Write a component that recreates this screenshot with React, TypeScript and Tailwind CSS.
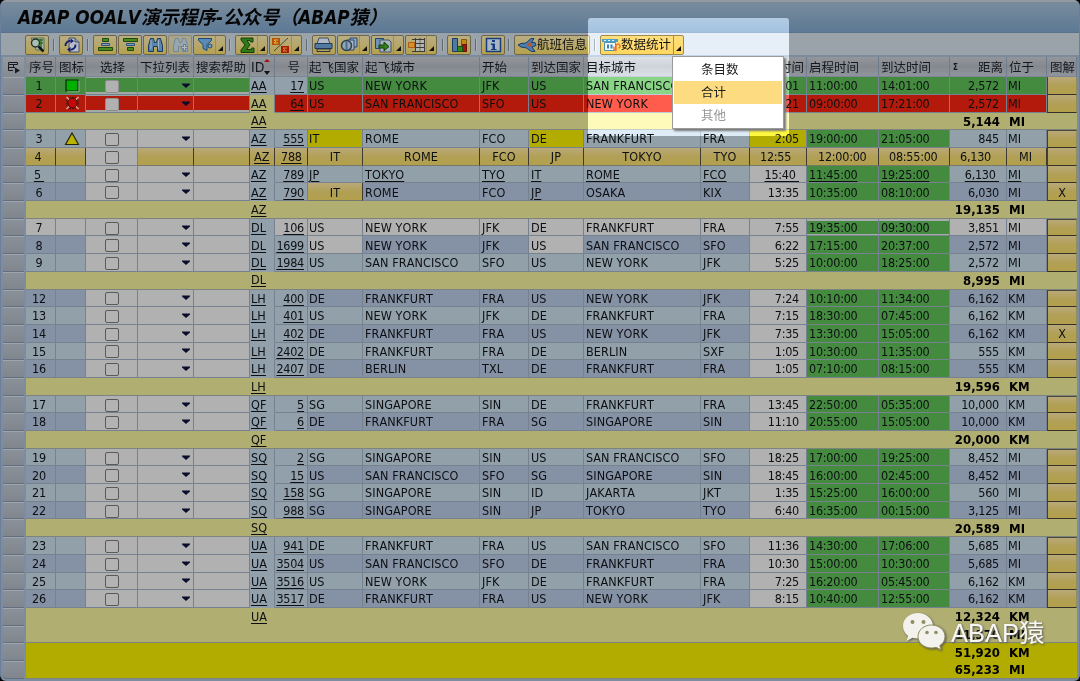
import type { ReactNode } from 'react'
import clsx from 'clsx'

type Tone = 'key' | 'odd' | 'even' | 'gray' | 'green' | 'red' | 'yellow' | 'gold' | 'sub'

interface Flight {
  kind: 'row'
  no: string
  cells: string[] // id, number, country from, city from, from, country to, city to, to, duration, dep, arr, distance, unit
}

interface Total {
  kind: 'sub' | 'total'
  id: string
  value: string
  unit: string
  joined?: boolean
}

type Line = Flight | Total

const row = (text: string): Flight => {
  const [no, ...cells] = text.split('|')
  return { kind: 'row', no, cells }
}

const sub = (id: string, value: string, unit: string, joined = false): Total => ({
  kind: 'sub',
  id,
  value,
  unit,
  joined,
})

const lines: Line[] = [
  row('1|AA|17|US|NEW YORK|JFK|US|SAN FRANCISCO|SFO|6:01|11:00:00|14:01:00|2,572|MI'),
  row('2|AA|64|US|SAN FRANCISCO|SFO|US|NEW YORK|JFK|5:21|09:00:00|17:21:00|2,572|MI'),
  sub('AA', '5,144', 'MI'),
  row('3|AZ|555|IT|ROME|FCO|DE|FRANKFURT|FRA|2:05|19:00:00|21:05:00|845|MI'),
  row('4|AZ|788|IT|ROME|FCO|JP|TOKYO|TYO|12:55|12:00:00|08:55:00|6,130|MI'),
  row('5|AZ|789|JP|TOKYO|TYO|IT|ROME|FCO|15:40|11:45:00|19:25:00|6,130|MI'),
  row('6|AZ|790|IT|ROME|FCO|JP|OSAKA|KIX|13:35|10:35:00|08:10:00|6,030|MI'),
  sub('AZ', '19,135', 'MI'),
  row('7|DL|106|US|NEW YORK|JFK|DE|FRANKFURT|FRA|7:55|19:35:00|09:30:00|3,851|MI'),
  row('8|DL|1699|US|NEW YORK|JFK|US|SAN FRANCISCO|SFO|6:22|17:15:00|20:37:00|2,572|MI'),
  row('9|DL|1984|US|SAN FRANCISCO|SFO|US|NEW YORK|JFK|5:25|10:00:00|18:25:00|2,572|MI'),
  sub('DL', '8,995', 'MI'),
  row('12|LH|400|DE|FRANKFURT|FRA|US|NEW YORK|JFK|7:24|10:10:00|11:34:00|6,162|KM'),
  row('13|LH|401|US|NEW YORK|JFK|DE|FRANKFURT|FRA|7:15|18:30:00|07:45:00|6,162|KM'),
  row('14|LH|402|DE|FRANKFURT|FRA|US|NEW YORK|JFK|7:35|13:30:00|15:05:00|6,162|KM'),
  row('15|LH|2402|DE|FRANKFURT|FRA|DE|BERLIN|SXF|1:05|10:30:00|11:35:00|555|KM'),
  row('16|LH|2407|DE|BERLIN|TXL|DE|FRANKFURT|FRA|1:05|07:10:00|08:15:00|555|KM'),
  sub('LH', '19,596', 'KM'),
  row('17|QF|5|SG|SINGAPORE|SIN|DE|FRANKFURT|FRA|13:45|22:50:00|05:35:00|10,000|KM'),
  row('18|QF|6|DE|FRANKFURT|FRA|SG|SINGAPORE|SIN|11:10|20:55:00|15:05:00|10,000|KM'),
  sub('QF', '20,000', 'KM'),
  row('19|SQ|2|SG|SINGAPORE|SIN|US|SAN FRANCISCO|SFO|18:25|17:00:00|19:25:00|8,452|MI'),
  row('20|SQ|15|US|SAN FRANCISCO|SFO|SG|SINGAPORE|SIN|18:45|16:00:00|02:45:00|8,452|MI'),
  row('21|SQ|158|SG|SINGAPORE|SIN|ID|JAKARTA|JKT|1:35|15:25:00|16:00:00|560|MI'),
  row('22|SQ|988|SG|SINGAPORE|SIN|JP|TOKYO|TYO|6:40|16:35:00|00:15:00|3,125|MI'),
  sub('SQ', '20,589', 'MI'),
  row('23|UA|941|DE|FRANKFURT|FRA|US|SAN FRANCISCO|SFO|11:36|14:30:00|17:06:00|5,685|MI'),
  row('24|UA|3504|US|SAN FRANCISCO|SFO|DE|FRANKFURT|FRA|10:30|15:00:00|10:30:00|5,685|MI'),
  row('25|UA|3516|US|NEW YORK|JFK|DE|FRANKFURT|FRA|7:25|16:20:00|05:45:00|6,162|KM'),
  row('26|UA|3517|DE|FRANKFURT|FRA|US|NEW YORK|JFK|8:15|10:40:00|12:55:00|6,162|KM'),
  sub('UA', '12,324', 'KM', true),
  sub('', '11,370', 'MI'),
  { kind: 'total', id: '', value: '51,920', unit: 'KM', joined: true },
  { kind: 'total', id: '', value: '65,233', unit: 'MI' },
]

const toneClass: Record<Tone, string> = {
  key: 'bg-[#92a0ab]',
  odd: 'bg-[#92a0aa]',
  even: 'bg-[#8591a4]',
  gray: 'bg-[#b1b1b1]',
  green: 'bg-[#448b40]',
  red: 'bg-[#b31a0c]',
  yellow: 'bg-[#b2ac00]',
  gold: 'bg-linear-to-b from-[#baa978] via-[#b1a056] to-[#b3a04c]',
  sub: 'bg-[#b1ae72]',
}

const gridCols =
  'grid grid-cols-[26px_30px_30px_52px_56px_56px_25px_33px_55px_117px_49px_55px_117px_49px_57px_72px_71px_57px_40px_30px]'

// Column index inside Flight.cells -> tone of the cell
function toneOf(no: string, col: number): Tone {
  const base: Tone = Number(no) % 2 ? 'odd' : 'even'
  if (col === 0) return no === '2' ? 'sub' : no === '4' ? 'gold' : 'key'
  if (no === '4') return 'gold'
  if (no === '1') return col === 1 ? 'key' : 'green'
  if (no === '2') return 'red'
  if (col === 9 || col === 10) return 'green'
  if (no === '3' && (col === 2 || col === 5 || col === 8)) return 'yellow'
  if (no === '6' && col === 2) return 'gold'
  if (no === '7') return 'gray'
  if (no === '8' && (col === 2 || col === 5)) return 'gray'
  if (col === 8) return 'gray'
  if (col === 1) return 'key'
  return base
}

function isUnderlined(no: string, col: number) {
  if (col < 2) return true
  if (no === '5') return true
  return no === '6' && col === 5
}

const isNumeric = (col: number) => col === 1 || (col >= 8 && col <= 11)

function Cell({ tone, className, children }: { tone: Tone; className?: string; children?: ReactNode }) {
  return (
    <div
      className={clsx(
        'flex min-w-0 items-center overflow-hidden border-b border-r pt-[2px] whitespace-pre',
        tone === 'gold' ? 'border-r-[#3f3b33] border-b-[#77776a]' : 'border-[#76828f]',
        toneClass[tone],
        className,
      )}
    >
      {children}
    </div>
  )
}

function Selector({ last }: { last?: boolean }) {
  return (
    <div className="flex pl-[3px]">
      <div
        className={clsx(
          'w-[21px] border-t border-b border-t-[#a0a5ab] border-b-[#626f80] bg-linear-to-b from-[#8a9099] to-[#81868e]',
          last && 'rounded-bl-sm',
        )}
      />
    </div>
  )
}

function StatusIcon({ no }: { no: string }) {
  if (no === '1') {
    return (
      <svg className="h-[14px] w-[15px]" viewBox="0 0 15 14">
        <path d="M1 1h12v11H1z" fill="#00b000" stroke="#10240f" strokeWidth="1.2" />
        <path d="M2 12.800h12V2" fill="none" stroke="#8bb487" />
      </svg>
    )
  }
  if (no === '2') {
    return (
      <svg className="h-[14px] w-[15px]" viewBox="0 0 15 15">
        <path d="M1 1l3 3M14 1l-3 3M1 14l3-3M14 14l-3-3" stroke="#d6a79c" strokeWidth="1.500" />
        <path d="M4 1.500h7M4 13.500h7M1.500 4v7M13.500 4v7" stroke="#301210" strokeDasharray="2 1" />
        <circle cx="7.500" cy="7.500" r="5" fill="#c40808" stroke="#4a0d0a" />
      </svg>
    )
  }
  if (no === '3') {
    return (
      <svg className="h-[14px] w-[16px]" viewBox="0 0 16 14">
        <path d="M8 1l6.500 11.500h-13z" fill="#b9b400" stroke="#26260d" strokeWidth="1.200" />
      </svg>
    )
  }
  return null
}

const columnPad = [
  'pl-px',
  'justify-end pr-[3px]',
  'pl-[1px]',
  'pl-[2px]',
  'pl-[2px]',
  'pl-[2px]',
  'pl-[2px]',
  'pl-[2px]',
  'justify-end pr-[7px]',
  'pl-[2px]',
  'pl-[2px]',
  'justify-end pr-[7px]',
  'pl-[1px]',
]

const buttonPad = [
  'pl-1',
  'pl-[6px]',
  'justify-center',
  'justify-center',
  'justify-center',
  'justify-center',
  'justify-center',
  'justify-center',
  'pl-[10px]',
  'pl-[11px]',
  'pl-[10px]',
  'pl-[10px]',
  'pl-[12px]',
]

function FlightRow({ flight, afterSub }: { flight: Flight; afterSub: boolean }) {
  const { no, cells } = flight
  const base: Tone =
    no === '1' ? 'green' : no === '2' ? 'red' : no === '4' ? 'gold' : no === '7' ? 'gray' : Number(no) % 2 ? 'odd' : 'even'
  const inputTone: Tone = no === '1' ? 'green' : no === '2' ? 'red' : 'gray'
  const inset = no === '1' || no === '2' ? 'shadow-[inset_0_-2px_0_#a3a9a6,inset_0_1px_0_#9ba5a4]' : ''

  return (
    <div className={clsx(gridCols, 'h-[17.690px] text-[12.500px]')}>
      <Selector />
      <Cell tone={base} className={clsx(no === '4' ? 'justify-center pr-[5px]' : 'justify-center pr-[3px]')}>
        <span className={clsx('tracking-[-0.25px]', no === '5' && 'underline underline-offset-2')}>
          {no === '5' ? '5 ' : no}
        </span>
      </Cell>
      <Cell tone={base} className="justify-center pt-0! pl-[3px]">
        <StatusIcon no={no} />
      </Cell>
      <Cell tone={inputTone} className={clsx('justify-center', inset)}>
        <span
          className={clsx(
            'h-[13px] w-[14px] rounded-[2px] border',
            Number(no) < 3 ? 'border-[#908f8f] bg-[#b1b1b1]' : 'border-[#595959] bg-[#b3b3b3]',
          )}
        />
      </Cell>
      <Cell tone={no === '4' ? 'gold' : inputTone} className={clsx('justify-end pt-0! pr-[3px]', inset)}>
        {no !== '4' && (
          <svg className="h-[5px] w-2" viewBox="0 0 8 5">
            <path d="M0 .5h8v1L4 5 0 1.500z" fill="#0a0d2c" />
          </svg>
        )}
      </Cell>
      <Cell tone={no === '4' ? 'gold' : inputTone} className={inset} />
      {cells.map((text, col) => {
        const tone = toneOf(no, col)
        return (
          <Cell
            key={col}
            tone={tone}
            className={clsx(
              tone === 'gold' ? buttonPad[col] : columnPad[col],
              col === 0 && tone !== 'gold' && 'border-b-transparent',
              no === '7' && (col === 9 || col === 10) && 'shadow-[inset_0_2px_0_#a7adad,inset_0_-1px_0_#a7adad]',
            )}
          >
            <span
              className={clsx(
                'relative z-10',
                isNumeric(col) ? 'tracking-[-0.25px]' : 'tracking-[0.1px]',
                isUnderlined(no, col) && 'underline underline-offset-2',
              )}
            >
              {no === '5' && (col === 8 || col === 11) ? text + ' ' : text}
            </span>
          </Cell>
        )
      })}
      <Cell
        tone="gold"
        className={clsx(
          'justify-center border-l border-l-[#3c3f45] border-r-[#938c5f]! border-b-[#33312a]!',
          afterSub && 'border-t border-t-[#4b4838]',
        )}
      >
        {(no === '6' || no === '14') && 'X'}
      </Cell>
    </div>
  )
}

function TotalRow({ total, last }: { total: Total; last: boolean }) {
  return (
    <div className="flex h-[17.690px]">
      <div className="grid w-[26px]">
        <Selector last={last} />
      </div>
      <div
        className={clsx(
          'flex w-[1051px] items-center border-b pt-px',
          total.kind === 'sub' ? 'bg-[#b1ae72]' : 'bg-[#b2ac00]',
          total.joined ? 'border-transparent' : 'border-[#7d8480]',
        )}
      >
        <span className="pl-[225px] text-[12.500px] underline underline-offset-2">{total.id}</span>
        <span className="ml-auto text-[13px] font-bold text-black">{total.value}</span>
        <span className="ml-[9px] w-[68px] text-[13px] font-bold text-black">{total.unit}</span>
      </div>
    </div>
  )
}

const headers = [
  { label: '序号', className: 'pl-[3px]' },
  { label: '图标', className: 'pl-[3px]' },
  { label: '选择', className: 'pl-[14px]' },
  { label: '下拉列表', className: 'pl-[2px]' },
  { label: '搜索帮助', className: 'pl-[2px]' },
  { label: 'ID', className: 'pl-px text-[14px]' },
  { label: '号', className: 'justify-end pr-[7px]' },
  { label: '起飞国家', className: 'pl-[1px]' },
  { label: '起飞城市', className: 'pl-[2px]' },
  { label: '开始', className: 'pl-[2px]' },
  { label: '到达国家', className: 'pl-[2px]' },
  { label: '目标城市', className: 'pl-[2px]' },
  { label: '', className: 'pl-[2px]' },
  { label: '时间', className: 'justify-end pr-[2px]' },
  { label: '启程时间', className: 'pl-[2px]' },
  { label: '到达时间', className: 'pl-[2px]' },
  { label: '距离', className: 'justify-end pr-[3px]' },
  { label: '位于', className: 'pl-[2px]' },
  { label: '图解', className: 'pl-[3px]' },
]

function HeaderRow() {
  return (
    <div className={clsx(gridCols, 'h-[20.300px] text-[12.500px] text-[#15181c]')}>
      <div className="flex pl-[3px]">
        <div className="flex w-[21px] items-center justify-center bg-linear-to-b from-[#979a9e] to-[#858b93]">
          <svg className="h-[13px] w-[14px]" viewBox="0 0 14 13" fill="none" stroke="#181b20">
            <path d="M1.500 1.500h9v2h-9zM1.500 4v5.500H6M1.500 6.500H8M6.500 3.500v3" />
            <path d="M8 6.500l5 3-5 3z" fill="#181b20" stroke="none" />
          </svg>
        </div>
      </div>
      {headers.map((h, i) => (
        <div
          key={i}
          className={clsx(
            'flex min-w-0 items-center overflow-hidden border-r border-r-[#717c8a] border-b border-b-[#7d8793] bg-linear-to-b from-[#93969a] via-[#85898f] to-[#8f959c] whitespace-nowrap',
            h.label === 'ID' ? 'pt-px' : 'pt-[3px]',
            h.className,
          )}
        >
          {h.label === '距离' && <span className="mr-auto pl-[3px] text-[8px] font-bold">Σ</span>}
          <span className="relative z-10">{h.label}</span>
          {h.label === 'ID' && (
            <svg className="h-4 w-[6px] shrink-0" viewBox="0 0 6 16">
              <path d="M0 3L3 0l3 3z" fill="#a80d0d" />
              <path d="M0 12h6l-3 4z" fill="#111" />
            </svg>
          )}
        </div>
      ))}
    </div>
  )
}

function Corner() {
  return (
    <svg className="absolute right-[2px] bottom-[3px] size-[5px]" viewBox="0 0 5 5">
      <path d="M5 0v5H0z" fill="#111" />
    </svg>
  )
}

function ToolButton({ className, menu, children }: { className: string; menu?: boolean; children: ReactNode }) {
  return (
    <div
      className={clsx(
        'relative flex h-[20px] shrink-0 items-center rounded-[2px] border border-[#6f664a] bg-linear-to-b from-[#b9ad83] to-[#b5a14e] pl-[3px]',
        className,
      )}
    >
      {children}
      {menu && <span className="absolute top-0 right-[9px] h-full w-px bg-[#a08f52]" />}
      {menu && <Corner />}
    </div>
  )
}

function Separator({ className }: { className: string }) {
  return <span className={clsx('h-3 w-[2px] shrink-0 border-l border-[#62696f] bg-[#aab0b6]', className)} />
}

function Icon({ children, wide }: { children: ReactNode; wide?: boolean }) {
  return (
    <svg className={clsx('h-4 shrink-0', wide ? 'w-5' : 'w-[17px]')} viewBox={wide ? '0 0 20 16' : '0 0 17 16'} fill="none">
      {children}
    </svg>
  )
}

function Toolbar() {
  return (
    <div className="flex h-6 shrink-0 items-start border-b-2 border-[#7b8b9d] bg-[#9aa2aa] pt-[2px] pl-[24px] text-[12.500px] text-[#111]">
      <ToolButton className="w-6">
        <Icon>
          <path d="M2 1h13v12H7z" fill="#a9b4ac" stroke="#58735a" />
          <path d="M12 2v10M9 3h5M9 6h5" stroke="#2e7023" strokeWidth="1.500" />
          <circle cx="6.500" cy="6" r="4" fill="#a9c0b0" stroke="#24302b" strokeWidth="1.400" />
          <path d="M9.500 9.500l5 5" stroke="#111a16" strokeWidth="2.500" />
        </Icon>
      </ToolButton>
      <Separator className="mt-1 ml-[4px]" />
      <ToolButton className="ml-[4px] w-6">
        <Icon>
          <path d="M6 1h6l4 4v10H6z" fill="#b7bcc6" stroke="#41506a" />
          <path d="M12 1v4h4" fill="#8e9cb0" stroke="#41506a" />
          <path d="M2.500 9a4.500 4.500 0 0 1 5-5M12.500 7.500a4.500 4.500 0 0 1-5 5" stroke="#15196e" strokeWidth="1.800" />
          <path d="M7.500 1.500l3.500 2.500-3.500 2.500zM7.500 10l-3.500 2.500L7.500 15z" fill="#15196e" />
        </Icon>
      </ToolButton>
      <Separator className="mt-1 ml-[4px]" />
      <ToolButton className="ml-[4px] w-6">
        <Icon>
          <path d="M5.500 1.500h6v3h-6z" fill="#4c8a1a" stroke="#1d4a12" />
          <path d="M4.500 6.500h8v2h-8z" fill="#7aa0bd" stroke="#2a547c" />
          <path d="M1.500 10.500h14v3h-14z" fill="#4c8a1a" stroke="#1d4a12" />
        </Icon>
      </ToolButton>
      <ToolButton className="ml-px w-6">
        <Icon>
          <path d="M1.500 1.500h14v3h-14z" fill="#4c8a1a" stroke="#1d4a12" />
          <path d="M4.500 6.500h8v2h-8z" fill="#7aa0bd" stroke="#2a547c" />
          <path d="M5.500 10.500h6v3h-6z" fill="#4c8a1a" stroke="#1d4a12" />
        </Icon>
      </ToolButton>
      <ToolButton className="ml-px w-6">
        <Icon>
          <path d="M3.500 1.500h3l1 4h2l1-4h3l2 7v6h-5v-5h-4v5h-5v-6z" fill="#5b82a8" stroke="#143a68" />
          <path d="M4 3v9M11.500 3v9" stroke="#9bb3c8" />
        </Icon>
      </ToolButton>
      <ToolButton className="ml-px w-6 border-[#8e8870] from-[#a9a58f]! to-[#aaa376]!">
        <Icon>
          <path d="M3.500 1.500h3l1 4h2l1-4h3l2 7v6h-5v-5h-4v5h-5v-6z" fill="#98a6ad" stroke="#7088a0" />
          <path d="M12.500 7v7M9 10.500h7" stroke="#6683a2" strokeWidth="3" />
          <path d="M12.500 8v5M10 10.500h5" stroke="#b4bcc0" />
        </Icon>
      </ToolButton>
      <ToolButton menu className="ml-px w-[33px]">
        <Icon>
          <path d="M1.500 1.500h13v2l-4.500 4v6l-4-2V7.500l-4.500-4z" fill="#5b8bb4" stroke="#1c4a7a" />
          <circle cx="13" cy="9" r="2" fill="#7fa2bd" stroke="#1c4a7a" />
        </Icon>
      </ToolButton>
      <Separator className="mt-1 ml-[3px]" />
      <ToolButton menu className="ml-[4px] w-[33px]">
        <Icon>
          <path d="M2 1h12v4h-2.500l-.5-1.500H8L11 8l-3.500 4.500H12l.5-1.500H15v4.500H2V13l4-5-4-5z" fill="#2e7a16" stroke="#143f0c" />
        </Icon>
      </ToolButton>
      <ToolButton menu className="ml-px w-[33px] pl-[1px]!">
        <Icon wide>
          <path d="M1 1h8v7H1z" fill="#b5500f" />
          <path d="M7 3H3l2 1.500L3 6h4" stroke="#e6bd30" />
          <path d="M10 9h8v7h-8z" fill="#a91b0e" />
          <path d="M16 11h-4l2 1.500-2 1.500h4" stroke="#d88b22" />
          <path d="M3 14L17 1" stroke="#4b4741" />
        </Icon>
      </ToolButton>
      <Separator className="mt-1 ml-[4px]" />
      <ToolButton className="ml-[4px] w-6 pl-[1px]!">
        <Icon wide>
          <path d="M5 1h9l2 6H3z" fill="#afb9c4" stroke="#3d4d63" />
          <path d="M1 6.500h17v5H1z" fill="#54799f" stroke="#193a63" />
          <path d="M3 12h13v2.500H3z" fill="#b5a85f" stroke="#2a3440" />
        </Icon>
      </ToolButton>
      <ToolButton menu className="ml-px w-[33px] pl-[2px]!">
        <Icon wide>
          <path d="M10 1h7v9h-7z" fill="#93a9c4" stroke="#27466e" />
          <path d="M7 3h7v10H7z" fill="#a9b7c5" stroke="#27466e" />
          <circle cx="6.500" cy="8.500" r="5" fill="#93a5b3" stroke="#2d3e52" strokeWidth="1.500" />
          <path d="M6.500 4v9" stroke="#4a6d90" strokeWidth="2" />
        </Icon>
      </ToolButton>
      <ToolButton menu className="ml-px w-[33px] pl-[2px]!">
        <Icon wide>
          <path d="M1.500 1.500h8v10h-8z" fill="#6d93b5" stroke="#1f4670" />
          <path d="M6 3h9l2 2v10H6z" fill="#a9b6bf" stroke="#41536a" />
          <path d="M5 8h5V5l5 4.500L10 14v-3H5z" fill="#2f7f16" stroke="#173f0d" />
        </Icon>
      </ToolButton>
      <ToolButton menu className="ml-px w-[32px] pl-[1px]!">
        <Icon wide>
          <path d="M5 2.500h13M5 6.500h13M5 10.500h13M5 14.500h13M8.500 1v14M13 1v14M17.500 1v14" stroke="#3b3b3c" />
          <path d="M9 3h3.500v3H9zM13.500 3H17v3h-3.500zM9 7h3.500v3H9zM13.500 7H17v3h-3.500zM9 11h3.500v3H9zM13.500 11H17v3h-3.500z" fill="#b2b5b5" />
          <path d="M1.500 5.500h6v5h-6z" fill="#d5912c" stroke="#b25c10" />
        </Icon>
      </ToolButton>
      <Separator className="mt-1 ml-[5px]" />
      <ToolButton className="ml-[3px] w-6">
        <Icon>
          <path d="M1.500 1.500h5v13h-5z" fill="#5279a0" stroke="#173b69" />
          <path d="M10.500 2.500h5v7h-5z" fill="#c08b12" stroke="#86560d" />
          <path d="M11.500 7.500h4v7h-4z" fill="#a3160d" stroke="#650f0b" />
          <path d="M6.500 9.500h5v5h-5z" fill="#2f8a18" stroke="#165010" />
        </Icon>
      </ToolButton>
      <Separator className="mt-1 ml-[4px]" />
      <ToolButton className="ml-[4px] w-6">
        <Icon>
          <path d="M1.500 1.500h14v13h-14z" fill="#a9b5c0" stroke="#173d7c" strokeWidth="1.500" />
          <path d="M7 3h3v2H7zM6 6.500h4V12h1.500v1H6v-1h1.500V8H6z" fill="#123d82" />
        </Icon>
      </ToolButton>
      <Separator className="mt-1 ml-[3px]" />
      <ToolButton className="ml-[4px] w-[76px] pl-[2px]!">
        <Icon wide>
          <path d="M1 8l3-1.500 5-.5 5-4.500h3L14.500 5.500H18l1 3-4 1.500 3 4.500h-3.500L9.500 11 4 10z" fill="#4f7cab" stroke="#173e70" />
          <path d="M11 6h3.500v4l-3-1z" fill="#c5531b" />
        </Icon>
        <span className="relative z-10 pt-px">航班信息</span>
      </ToolButton>
      <Separator className="mt-1 ml-[4px]" />
      {/* active button, drawn at full brightness */}
      <ToolButton menu className="z-10 ml-[4px] w-[84px] border-[#a08a4c]! from-[#ffdf7e]! to-[#ffd75e]! pl-0!">
        <Icon wide>
          <path d="M1 2h16v3H1z" fill="#4f9fc4" />
          <path d="M3 3.500h2M7 3.500h2M11 3.500h2" stroke="#e8f4fa" />
          <path d="M3.500 5.500h11v8h-11z" fill="#f2f8fb" stroke="#4a93b3" />
          <path d="M6 7.500h2v4H6zM9.500 7.500h2v4h-2z" fill="#3d7fa6" />
          <path d="M15 14V9.500a2 2 0 1 1 2.500 1.500M13 9.500v3l2 1.500" stroke="#e87a2c" strokeWidth="1.500" />
        </Icon>
        <span className="pt-px">数据统计</span>
      </ToolButton>
    </div>
  )
}

function DropdownMenu() {
  return (
    <div className="absolute top-14 left-[672px] z-20 flex h-[73px] w-28 flex-col border border-[#9a9a9a] bg-white pt-[2px] text-[12.500px] text-[#1c1c1c] shadow-[2px_2px_2px_#777]">
      <div className="flex h-[22px] items-center pl-7">条目数</div>
      <div className="mx-px flex h-[23px] items-center bg-[#fddb80] pt-px pl-[27px]">合计</div>
      <div className="flex h-[23px] items-center pt-px pl-7 text-[#979797]">其他</div>
    </div>
  )
}

function Watermark() {
  return (
    <div className="absolute top-[611px] left-[902px] z-20 flex items-center drop-shadow-[1px_1px_1px_#555]">
      <svg className="h-[38px] w-[44px]" viewBox="0 0 44 38" fill="#f3f2ec">
        <path d="M16 1C7.500 1 1 6.800 1 14c0 4 2 7.500 5.200 9.900L4.500 29l6-3.200c1.700.5 3.600.8 5.500.8C24 26.600 31 21 31 14S24 1 16 1z" />
        <path
          d="M29.500 13C22 13 16 18 16 24.500S22 36 29.500 36c1.600 0 3.200-.2 4.600-.7l5 2.600-1.300-4.300c3.300-2 5.200-5.300 5.200-9.100C43 18 37 13 29.500 13z"
          stroke="#8f8d62"
        />
        <g fill="#8f8d62">
          <circle cx="10.500" cy="10" r="2" />
          <circle cx="21.500" cy="10" r="2" />
          <circle cx="25" cy="20.500" r="1.800" />
          <circle cx="34" cy="20.500" r="1.800" />
        </g>
      </svg>
      <span className="ml-[5px] pt-1 font-['Liberation_Sans','Noto_Sans_CJK_SC',sans-serif] text-[25.500px] leading-9 whitespace-nowrap text-[#f7f7f4]">
        ABAP猿
      </span>
    </div>
  )
}

export default function App() {
  return (
    <div className="relative h-[681px] w-[1080px] overflow-hidden bg-black font-['DejaVu_Sans_Condensed','Noto_Sans_CJK_SC',sans-serif] text-[12px] leading-none text-[#0d0f12] [font-kerning:none]">
      <div className="flex h-full flex-col overflow-hidden rounded-md border-x border-[#6b7f96] bg-[#7c8da1]">
        <div className="flex h-[33px] shrink-0 items-center border-t-2 border-b border-t-[#9299a0] border-b-[#5a728c] bg-linear-to-b from-[#798c9c] to-[#5d7995] pt-[2px] pl-[17px] text-[18.800px] font-bold italic whitespace-nowrap text-[#050505]">
          ABAP OOALV演示程序-公众号（ABAP猿）
        </div>
        <Toolbar />
        <div className="-ml-px w-[1077px]">
          <HeaderRow />
          {lines.map((line, i) =>
            line.kind === 'row' ? (
              <FlightRow key={i} flight={line} afterSub={i > 0 && lines[i - 1].kind !== 'row'} />
            ) : (
              <TotalRow key={i} total={line} last={i === lines.length - 1} />
            ),
          )}
        </div>
      </div>

      {/* spotlight over the statistics button */}
      <div className="absolute top-[18px] left-[588px] h-[118px] w-[201px] rounded-[3px] bg-[#4d4d4d] mix-blend-color-dodge" />
      <div className="absolute top-[18px] left-[588px] h-[118px] w-[201px] rounded-[3px] bg-[#404040] mix-blend-screen" />
      <DropdownMenu />
      <Watermark />
    </div>
  )
}
